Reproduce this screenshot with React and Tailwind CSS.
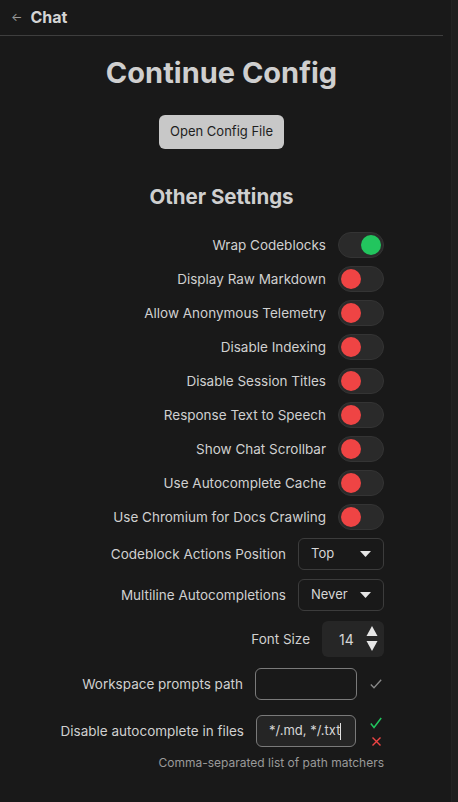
import React from "react";

function Toggle({ on }) {
  return (
    <div className="w-[46px] h-[26px] rounded-full bg-[#2a2a2a] border border-[#343434] flex items-center px-[2px]">
      <div
        className={
          on
            ? "ml-auto w-[20px] h-[20px] rounded-full bg-[#22c55e]"
            : "w-[20px] h-[20px] rounded-full bg-[#ef4444]"
        }
      />
    </div>
  );
}

function Row({ label, children, className = "" }) {
  return (
    <div className={"flex items-center justify-end gap-3 " + className}>
      <span className="text-[13.5px] text-[#d0d0d0]">{label}</span>
      {children}
    </div>
  );
}

function Select({ value }) {
  return (
    <div className="w-[86px] h-[32px] rounded-md border border-[#3c3c3c] flex items-center justify-between pl-[12px] pr-[12px] text-[13px] text-[#d6d6d6]">
      <span>{value}</span>
      <svg width="11" height="6" viewBox="0 0 11 6">
        <path d="M0 0 L11 0 L5.5 6 Z" fill="#e6e6e6" />
      </svg>
    </div>
  );
}

export default function App() {
  const toggles = [
    ["Wrap Codeblocks", true],
    ["Display Raw Markdown", false],
    ["Allow Anonymous Telemetry", false],
    ["Disable Indexing", false],
    ["Disable Session Titles", false],
    ["Response Text to Speech", false],
    ["Show Chat Scrollbar", false],
    ["Use Autocomplete Cache", false],
    ["Use Chromium for Docs Crawling", false],
  ];
  return (
    <div
      className="w-[458px] h-[802px] bg-[#191919] flex overflow-hidden"
      style={{ fontFamily: "Inter, 'Noto Sans', sans-serif" }}
    >
      <div className="w-[443px] flex flex-col">
        <div className="h-[36px] border-b border-[#3e3e3e] flex items-center pl-[11px] pb-[2px]">
          <span className="text-[12px] text-[#9a9a9a] mr-[8px]">←</span>
          <span className="text-[16px] font-bold text-[#d4d4d4]">Chat</span>
        </div>
        <div className="flex flex-col items-center">
          <h1 className="mt-[19px] text-[29px] leading-[36px] font-bold text-[#cfcfcf]">
            Continue Config
          </h1>
          <button className="mt-[24px] w-[125px] h-[34px] rounded-md bg-[#c8c8c8] text-[13px] text-[#1e1e1e]">
            Open Config File
          </button>
          <h2 className="mt-[34px] text-[20.5px] leading-[28px] font-bold text-[#cfcfcf]">
            Other Settings
          </h2>
        </div>
        <div className="w-[384px] flex flex-col items-stretch mt-[21px] gap-[8px]">
          {toggles.map(([l, on]) => (
            <Row key={l} label={l}>
              <Toggle on={on} />
            </Row>
          ))}
          <Row label="Codeblock Actions Position" className="mt-[0px]">
            <Select value="Top" />
          </Row>
          <Row label="Multiline Autocompletions" className="mt-[1px]">
            <Select value="Never" />
          </Row>
          <Row label="Font Size" className="mt-[2px]">
            <div className="w-[62px] h-[36px] rounded-md bg-[#262626] flex items-center justify-between pl-[17px] pr-[6px] text-[14px] text-[#d6d6d6]">
              <span>14</span>
              <svg width="12" height="28" viewBox="0 0 12 28">
                <path d="M6 1 L11.5 11 L0.5 11 Z" fill="#e6e6e6" />
                <path d="M0.5 16 L11.5 16 L6 26 Z" fill="#e6e6e6" />
              </svg>
            </div>
          </Row>
          <Row label="Workspace prompts path" className="mt-[3px]">
            <div className="flex items-center gap-[13px]">
              <div className="w-[102px] h-[32px] rounded-md border border-[#7a7a7a]" />
              <svg width="12" height="10" viewBox="0 0 12 10" className="mr-[2px]">
                <path d="M0.8 5.5 L4 8.8 L11.2 0.8" stroke="#8a8a8a" strokeWidth="1.3" fill="none" />
              </svg>
            </div>
          </Row>
          <Row label="Disable autocomplete in files" className="mt-[7px]">
            <div className="flex items-center gap-[14px]">
              <div className="w-[100px] h-[32px] rounded-md border border-[#7a7a7a] bg-[#252525] flex items-center pl-[12px] text-[13px] text-[#d6d6d6]">
                <span>*/.md, */.txt</span>
                <span className="w-px h-[17px] bg-[#e0e0e0]" />
              </div>
              <div className="flex flex-col items-center gap-[8px] mr-[2px]">
                <svg width="12" height="12" viewBox="0 0 12 12">
                  <path d="M0.8 6.5 L4 10.5 L11.2 1" stroke="#22c55e" strokeWidth="1.5" fill="none" />
                </svg>
                <svg width="9" height="9" viewBox="0 0 9 9">
                  <path d="M0.5 0.5 L8.5 8.5 M8.5 0.5 L0.5 8.5" stroke="#ef4444" strokeWidth="1.4" fill="none" />
                </svg>
              </div>
            </div>
          </Row>
          <div className="text-right text-[12px] text-[#9a9a9a] -mt-[1px]">
            Comma-separated list of path matchers
          </div>
        </div>
      </div>
      <div className="flex-1" />
      <div className="w-[7px] h-full bg-[#1e1e1e] border-l border-[#222]" />
    </div>
  );
}
